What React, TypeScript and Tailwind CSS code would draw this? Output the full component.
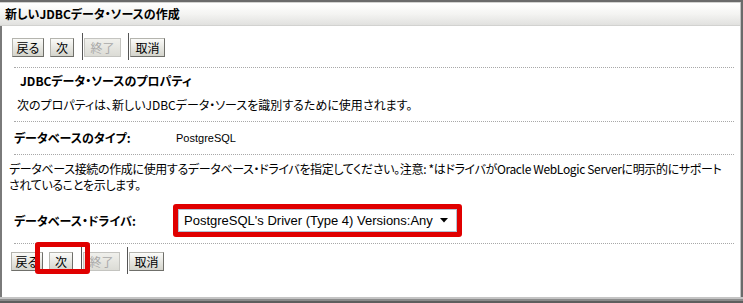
import React from "react";

const jp = "font-['Noto_Sans_CJK_JP',sans-serif] [font-feature-settings:'palt']";

function Btn({ label, w, disabled }: { label: string; w: string; disabled?: boolean }) {
  return (
    <div
      className={`${w} h-[19px] flex items-center justify-center text-[12px] leading-none border ${
        disabled
          ? "text-[#a9a9a9] bg-gradient-to-b from-[#f0f0ec] to-[#dcdcd6] border-[#c4c4c0]"
          : "text-black bg-gradient-to-b from-[#fbfbf9] to-[#d4d4cc] border-[#b4b4ae] border-b-[#6f6f6a] border-r-[#6f6f6a]"
      }`}
    >
      {label}
    </div>
  );
}

function ButtonRow() {
  return (
    <div className="flex items-start h-[27px]">
      <div className="mt-[5px] flex">
        <Btn label="戻る" w="w-[32px]" />
        <div className="w-[6px]" />
        <Btn label="次" w="w-[24px]" />
      </div>
      <div className="ml-[8px] w-px h-[27px] bg-[#555]" />
      <div className="mt-[5px] ml-[1px]">
        <Btn label="終了" w="w-[37px]" disabled />
      </div>
      <div className="ml-[7px] w-px h-[27px] bg-[#555]" />
      <div className="mt-[5px] ml-[1px]">
        <Btn label="取消" w="w-[35px]" />
      </div>
    </div>
  );
}

function Dotted() {
  return <div className="ml-[12px] mr-[6px] border-t border-dotted border-[#a8a8a8]" />;
}

export default function App() {
  return (
    <div className={`w-[743px] h-[303px] bg-white flex flex-col relative overflow-hidden text-black ${jp}`}>
      <div className="flex-1 flex flex-col border-t-2 border-[#6a6a6a] border-r-2 min-h-0">
        <div className="flex-1 flex flex-col border-r border-[#c2c2c2] min-h-0">
          {/* header */}
          <div className="h-[24px] border-t border-[#c8c8c8] bg-gradient-to-b from-white via-[#f4f4f2] to-[#e1e1df] border-b border-[#d2d2d0] flex items-center pl-[5px]">
            <span className="text-[12px] font-bold leading-none">新しいJDBCデータ・ソースの作成</span>
          </div>
          {/* body */}
          <div className="flex-1 flex flex-col border-l-2 border-[#7a7a7a] min-h-0">
            <div className="pl-[10px] mt-[7px]">
              <ButtonRow />
            </div>
            <div className="mt-[7px]">
              <Dotted />
            </div>
            <div className="h-[26px] flex items-center pl-[18px] text-[12px] font-bold">
              JDBCデータ・ソースのプロパティ
            </div>
            <div className="h-[22px] flex items-center pl-[15px] text-[12px]">
              次のプロパティは、新しいJDBCデータ・ソースを識別するために使用されます。
            </div>
            <div className="mt-[5px]">
              <Dotted />
            </div>
            <div className="h-[32px] flex items-center pl-[12px] text-[12px]">
              <span className="w-[162px] font-bold">データベースのタイプ:</span>
              <span className="font-['Liberation_Sans',sans-serif] text-[11px]">PostgreSQL</span>
            </div>
            <Dotted />
            <div className="pt-[6px] pl-[7px] text-[12px] leading-[16px] whitespace-nowrap tracking-[-0.35px]">
              データベース接続の作成に使用するデータベース・ドライバを指定してください。注意: *はドライバがOracle WebLogic Serverに明示的にサポート
              <br />
              されていることを示します。
            </div>
            <div className="mt-[11px] flex items-center pl-[12px]">
              <span className="w-[159px] text-[12px] font-bold">データベース・ドライバ:</span>
              <div className="border-[5px] border-[#e00000] rounded-[3px] w-[289px] h-[33px]">
                <div className="h-full border border-[#b5c3d4] bg-white flex items-center pl-[5px] pr-[8px]">
                  <span className="flex-1 font-['Liberation_Sans',sans-serif] text-[13px] leading-none">
                    PostgreSQL's Driver (Type 4) Versions:Any
                  </span>
                  <svg width="8" height="5" viewBox="0 0 8 5">
                    <polygon points="0,0 8,0 4,4.5" fill="#000" />
                  </svg>
                </div>
              </div>
            </div>
            <div className="mt-[6px]">
              <Dotted />
            </div>
            <div className="pl-[9px] mt-[3px]">
              <ButtonRow />
            </div>
          </div>
        </div>
      </div>
      {/* bottom border */}
      <div className="h-[2px] bg-[#c4c4c4]" />
      <div className="h-[2px] bg-[#8c8c8c]" />
      <div className="h-[2px] bg-[#5e5e5e]" />
      {/* annotation overlay */}
      <div className="absolute left-[35px] top-[242px] w-[55px] h-[32px] border-[5px] border-[#e00000] rounded-[3px]" />
    </div>
  );
}
